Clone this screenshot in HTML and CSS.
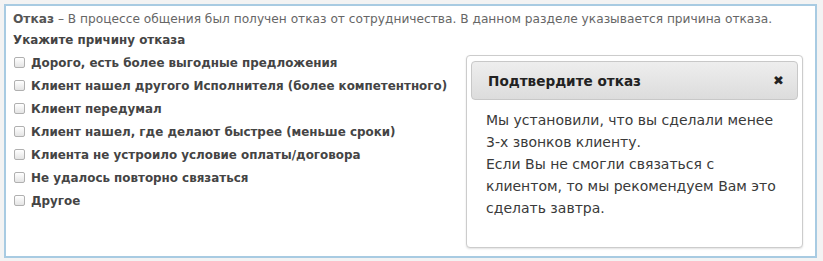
FILE: index.html
```html
<!DOCTYPE html>
<html lang="ru">
<head>
<meta charset="utf-8">
<link rel="stylesheet" href="styles.css">
</head>
<body>
<div class="panel">
  <p class="intro"><b>Отказ</b> – В процессе общения был получен отказ от сотрудничества. В данном разделе указывается причина отказа.</p>
  <div class="row">
    <div class="reasons">
      <div class="title">Укажите причину отказа</div>
      <label class="opt"><span class="box"></span>Дорого, есть более выгодные предложения</label>
      <label class="opt"><span class="box"></span>Клиент нашел другого Исполнителя (более компетентного)</label>
      <label class="opt"><span class="box"></span>Клиент передумал</label>
      <label class="opt"><span class="box"></span>Клиент нашел, где делают быстрее (меньше сроки)</label>
      <label class="opt"><span class="box"></span>Клиента не устроило условие оплаты/договора</label>
      <label class="opt"><span class="box"></span>Не удалось повторно связаться</label>
      <label class="opt"><span class="box"></span>Другое</label>
    </div>
    <div class="modal">
      <div class="modal-head">
        <span class="modal-title">Подтвердите отказ</span>
        <span class="close">✖</span>
      </div>
      <div class="modal-body">Мы установили, что вы сделали менее 3-х звонков клиенту.<br>Если Вы не смогли связаться с клиентом, то мы рекомендуем Вам это сделать завтра.</div>
    </div>
  </div>
</div>
</body>
</html>
```
FILE: styles.css
```css
html, body {
  margin: 0;
  padding: 0;
  background: #f3f3f3;
}
body {
  font-family: "DejaVu Sans", Verdana, sans-serif;
  color: #555;
}
.panel {
  margin: 4px 0 0 4px;
  width: 813px;
  height: 254px;
  background: #fff;
  border: 2px solid #a8cbe2;
  box-sizing: border-box;
  padding: 3px 0 0 7px;
}
.intro {
  margin: 0;
  font-size: 12.2px;
  line-height: 20px;
  color: #666;
  white-space: nowrap;
}
.intro b {
  color: #555;
}
.row {
  display: flex;
  align-items: flex-start;
}
.reasons {
  width: 453px;
}
.title {
  font-size: 11.9px;
  font-weight: bold;
  line-height: 22px;
  color: #444;
}
.opt {
  display: flex;
  align-items: center;
  height: 23px;
  font-size: 11.9px;
  font-weight: bold;
  color: #444;
  white-space: nowrap;
}
.box {
  width: 9px;
  height: 9px;
  border: 1px solid #b0b0b0;
  border-radius: 2px;
  background: linear-gradient(#fff, #e4e4e4);
  margin: 0 6px 0 1px;
  flex: none;
}
.modal {
  margin-top: 26px;
  width: 337px;
  height: 193px;
  box-sizing: border-box;
  border: 1px solid #ccc;
  border-radius: 4px;
  padding: 5px 4px 4px;
  box-shadow: 0 1px 2px rgba(0,0,0,0.12);
  background: #fff;
}
.modal-head {
  display: flex;
  justify-content: space-between;
  align-items: center;
  height: 39px;
  box-sizing: border-box;
  border: 1px solid #c8c8c8;
  border-radius: 4px;
  background: linear-gradient(#eeeeee, #dcdcdc);
  padding: 0 13px 0 16px;
}
.modal-title {
  font-size: 13.6px;
  font-weight: bold;
  color: #222;
}
.close {
  font-size: 13px;
  color: #222;
}
.modal-body {
  padding: 9px 12px 0 15px;
  font-size: 14px;
  line-height: 22px;
  color: #3a3a3a;
}
```
